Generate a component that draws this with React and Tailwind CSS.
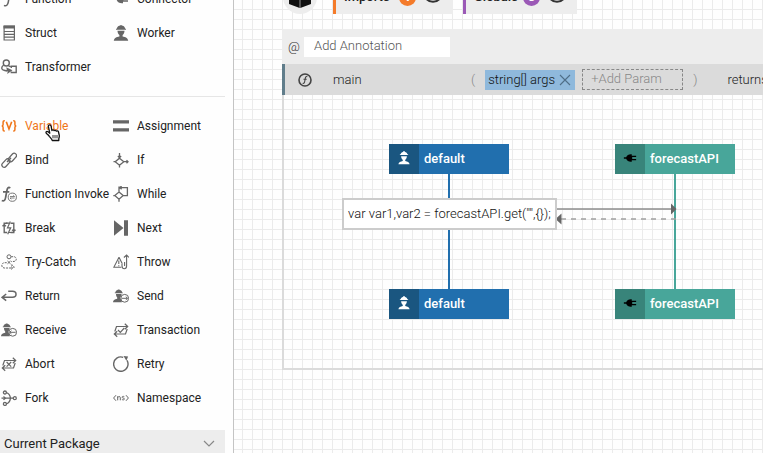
import React from "react";

const S = { fill: "none", stroke: "currentColor", strokeWidth: 1.3 };

function Icon({ children }) {
  return (
    <svg viewBox="0 0 16 16" className="size-4 shrink-0" aria-hidden="true">
      {children}
    </svg>
  );
}

const workerShape = (
  <g fill="currentColor">
    <path d="M3 4.700v-.9h.8C4 2.200 5 1.100 6.600.800L7 .2h2l.4.6c1.600.3 2.600 1.400 2.800 3h.8v.9z" />
    <path d="M4.500 5.800h7c0 1.800-.7 3.300-1.900 4.300v1.500c3 .7 5.200 1.300 5.600 4.200H.8c.4-2.900 2.600-3.500 5.600-4.200v-1.500C5.200 9.100 4.500 7.600 4.500 5.800z" />
  </g>
);

const smallWorker = (
  <g fill="currentColor">
    <path d="M1.800 5.200V4.500h.6C2.600 3.200 3.500 2.200 4.600 2l.3-.6h1.600l.3.600c1.300.2 2.200 1.200 2.400 2.500h.6v.7z" />
    <path d="M3 5.900h5.600c0 1.400-.5 2.700-1.300 3.500v1.300l1.500.6v2.900H0c0-2 1.400-2.700 4.200-3.500V9.400C3.400 8.600 3 7.300 3 5.900z" />
  </g>
);

const loopArrows = (
  <g {...S} strokeWidth="1.200">
    <path d="M1.800 9.500L3.500 4.500h10.800M11.800 1.700l2.900 2.800-2.900 2.800" />
    <path d="M14.200 7l-1.700 5H1.700M4.200 14.800L1.300 12l2.900-2.800" />
  </g>
);

const icons = {
  fn: (
    <path {...S} strokeWidth="1.500" d="M12.500 2.500C10 .8 8.700 3 8.200 6l-.9 5c-.5 3-2 4.600-4.300 3.400M5 6.500h6" />
  ),
  connector: (
    <path
      fill="currentColor"
      d="M1 7.200h2.600C4.500 5 6.300 3.700 9 3.700h1v1.600h5v1.500h-4.500v2.400H15v1.500h-5v1.600H9c-2.700 0-4.500-1.300-5.400-3.500H1z"
    />
  ),
  struct: (
    <g>
      <path {...S} strokeWidth="1.200" d="M3.100 1v14h10.300V1M3 6.500h10.500M3 9.300h10.500M3 12.100h10.500M3 15h10.500" />
      <path fill="currentColor" d="M2.500.3H14v3.200H2.500z" />
    </g>
  ),
  worker: workerShape,
  transformer: (
    <g {...S} strokeWidth="1.400">
      <circle cx="5.300" cy="4" r="3" />
      <path d="M2.700 6C-.2 8 .3 10.800 3 11.300L6 12" />
      <path d="M10.300 9V7.200h4.900v6.300h-4.900v-1M7.500 6.800l2 .8" />
      <path fill="currentColor" stroke="none" d="M5.200 8.300l6.300 3-5.300 3.700.5-2.500-3-1.200 2.200-.6z" />
    </g>
  ),
  variable: (
    <g fill="none" stroke="currentColor" strokeWidth="1.500">
      <path d="M3.800 2.800H3.300c-.9 0-1.200.4-1.200 1.300v2.300c0 1-.4 1.500-1.400 1.500 1 0 1.400.6 1.400 1.500v2.400c0 .9.300 1.300 1.200 1.300h.5" />
      <path d="M12.200 2.800h.5c.9 0 1.200.4 1.200 1.300v2.300c0 1 .4 1.500 1.400 1.500-1 0-1.400.6-1.400 1.500v2.400c0 .9-.3 1.300-1.200 1.300h-.5" />
      <path strokeWidth="1.600" d="M5.300 3.800L8 11l2.700-7.200" />
    </g>
  ),
  assignment: <path fill="currentColor" d="M0 2.300h16v3.200H0zM0 10.300h16v3.200H0z" />,
  bind: (
    <g {...S} strokeWidth="1.300">
      <rect x="6.300" y="3.300" width="9.800" height="4.600" rx="2.300" transform="rotate(-48 11.200 5.300)" />
      <rect x="-.1" y="8.800" width="9.800" height="4.600" rx="2.300" transform="rotate(-48 4.800 10.900)" />
      <path d="M6 10l4-4.300" />
    </g>
  ),
  iff: (
    <path
      {...S}
      d="M6.500 1v4.500M4.900 4l1.600 1.800L8.100 4M6.500 6.200l4.300 3.500-4.300 3.500-4.300-3.500zM.5 9.700h1.800M10.800 9.700H15M13.500 8.200L15 9.700l-1.500 1.500M6.500 13v2.600"
    />
  ),
  invoke: (
    <g>
      <path {...S} strokeWidth="1.700" d="M9.300 2C7.300.6 6.300 2.300 5.800 5l-1.200 6.500C4.200 14.200 2.900 15.600.8 14.500M2 5.900h6.300" />
      <circle cx="11.300" cy="11.200" r="4.100" fill="#fff" stroke="currentColor" strokeWidth=".9" />
      <path {...S} strokeWidth=".8" d="M9 10.500h4.600L12.300 9.300M13.600 12H9l1.300 1.200" />
    </g>
  ),
  while: (
    <path
      {...S}
      d="M6 .5v5M6 6l4.200 3.600L6 13.200 1.800 9.600zM.3 9.600h1.500M6 13.200v2.600M10.200 9.600h4.200V1.600H6.600M8.600 0L6.800 1.600l1.800 1.600"
    />
  ),
  break: (
    <g {...S} strokeWidth="1.400">
      <path d="M6.500 3.200H3.200v9.300h3M9.500 3.200h3.300v9.300H9.500M1.500 6.200l1.700-1.600 1.700 1.600M11.100 9.700l1.700 1.600 1.700-1.600" />
      <path strokeWidth="1.200" d="M9.300 1.500L6.500 7.800h3.200l-3 6.500M5 3.200h3M8 12.500h3" />
    </g>
  ),
  next: <path fill="currentColor" d="M1 .3L10.500 8 1 15.700zM11 .3h4v15.400h-4z" />,
  trycatch: (
    <g {...S} strokeWidth="1">
      <circle cx="8" cy="2.800" r="2" />
      <path strokeDasharray="2 1" d="M10.200 2.700h3c2.800.5 2.700 4.500 0 4.700l-3 .2M5.700 8.700H3.300C0 9.200 0 13.800 3.300 14h7" />
      <path strokeDasharray="2 1" d="M10 11c2 0 3 .8 3 3" />
      <path d="M6.500 7l3 2.800M9.500 7l-3 2.800M10 12.600l1.700 1.400-1.700 1.400" />
    </g>
  ),
  throw: (
    <g {...S} strokeWidth="1.100">
      <path d="M6 3.300L.8 13.300h7.600M6 3.300l3.300 6.500M5.800 6.500V10M5.800 11.200v1" />
      <path d="M9 10v2c.2 3.600 4.500 3.600 4.600 0V1.500M11.600 12V8M10.900 3.500l2.700-2.500 2.300 2.500" />
    </g>
  ),
  return: <path {...S} strokeWidth="1.500" d="M5.200 6L1 9.300l4.200 3.300M1.300 9.300h10.200c4.700 0 4.700-6 0-6H7.200" />,
  send: (
    <g>
      {smallWorker}
      <circle cx="11.700" cy="10.300" r="3.900" fill="#fff" stroke="currentColor" strokeWidth="1" />
      <path {...S} strokeWidth="1" d="M8.500 10.300h6M12.800 8.700l1.700 1.600-1.700 1.600" />
    </g>
  ),
  receive: (
    <g>
      {smallWorker}
      <circle cx="11.700" cy="10.300" r="3.900" fill="#fff" stroke="currentColor" strokeWidth="1" />
      <path {...S} strokeWidth="1" d="M14.700 10.300h-6M10.400 8.700l-1.700 1.600 1.700 1.600" />
    </g>
  ),
  transaction: (
    <g>
      {loopArrows}
      <path {...S} strokeWidth="1.200" d="M5 8l2.300 2.300L11.300 6" />
    </g>
  ),
  abort: (
    <g>
      {loopArrows}
      <path {...S} strokeWidth="1.200" d="M5.600 6l4.600 4.600M10.200 6l-4.600 4.600" />
    </g>
  ),
  retry: (
    <g>
      <path {...S} strokeWidth="1.400" d="M10.200 1.300A7.200 7.200 0 1 0 14 4.400" />
      <path fill="currentColor" d="M10.500 0l4.600.4-1.700 4.300z" />
    </g>
  ),
  fork: (
    <g {...S} strokeWidth="1.300">
      <path d="M.5 8.200H12M9.500 8.200C9 5 7.500 3 5.200 2.600M9.500 8.200C9 11.500 7.500 13.500 5.200 13.900" />
      <circle cx="3.900" cy="2.500" r="1.500" />
      <circle cx="3.900" cy="13.900" r="1.500" />
      <circle cx="13.800" cy="8.200" r="1.500" />
      <path d="M2.500 6.500l1.800 1.700-1.800 1.700" />
    </g>
  ),
  namespace: (
    <g {...S} strokeWidth="1">
      <path d="M3 5.200L.6 8 3 10.800M13 5.200L15.400 8 13 10.800" />
      <path d="M4.700 10.300V6.200M4.700 7.600c.8-1.500 2.600-1.500 2.600.2v2.500M11.300 6.700c-1-.6-2.300-.4-2.200.6.200 1 2.200.5 2.300 1.500.1 1.200-1.500 1.400-2.500.6" />
    </g>
  ),
};

function Tool({ icon, label, active }) {
  return (
    <button
      type="button"
      className={
        "flex h-[34px] items-center gap-2 whitespace-nowrap text-left text-xs " +
        (active ? "text-[#ef7519]" : "text-[#666]")
      }
    >
      <Icon>{icons[icon]}</Icon>
      <span className={active ? "font-normal" : "font-normal text-[#222]"}>{label}</span>
    </button>
  );
}

const definitions = [
  ["fn", "Function"],
  ["connector", "Connector"],
  ["struct", "Struct"],
  ["worker", "Worker"],
  ["transformer", "Transformer"],
];

const statements = [
  ["variable", "Variable"],
  ["assignment", "Assignment"],
  ["bind", "Bind"],
  ["iff", "If"],
  ["invoke", "Function Invoke"],
  ["while", "While"],
  ["break", "Break"],
  ["next", "Next"],
  ["trycatch", "Try-Catch"],
  ["throw", "Throw"],
  ["return", "Return"],
  ["send", "Send"],
  ["receive", "Receive"],
  ["transaction", "Transaction"],
  ["abort", "Abort"],
  ["retry", "Retry"],
  ["fork", "Fork"],
  ["namespace", "Namespace"],
];

function Palette() {
  return (
    <aside className="relative flex w-[234px] shrink-0 flex-col overflow-hidden border-r border-[#c4c4c4] bg-[#fefefe]">
      <div className="-mt-[18px] grid shrink-0 grid-cols-[112px_1fr] pl-px">
        {definitions.map(([icon, label]) => (
          <Tool key={label} icon={icon} label={label} />
        ))}
      </div>
      <hr className="mt-3 mr-2 mb-3 shrink-0 border-[#e6e6e6]" />
      <div className="grid shrink-0 grid-cols-[112px_1fr] pl-px">
        {statements.map(([icon, label]) => (
          <Tool key={label} icon={icon} label={label} active={label === "Variable"} />
        ))}
      </div>
      <button
        type="button"
        className="mt-[15px] mr-2 flex h-7 shrink-0 items-center justify-between bg-[#ededed] pr-2.5 pl-1 font-normal text-[#222]"
      >
        Current Package
        <svg viewBox="0 0 12 8" className="h-2 w-3" aria-hidden="true">
          <path d="M1 1l5 5 5-5" fill="none" stroke="#888" strokeWidth="1.200" />
        </svg>
      </button>
      <svg viewBox="0 0 16 18" className="absolute top-[124px] left-[45px] h-[18px] w-4" aria-hidden="true">
        <path
          d="M3.300 2.200c0-1.800 2.600-1.800 2.800 0l.8 4.300c.5-1 2-.8 2.200.2.600-.8 2-.5 2.200.5.700-.6 2-.3 2.200.8l.8 3.500c.2 1.500-.5 2.500-.5 3.500v1.500H7.300c-.5-1.500-2-2.800-3-4.200C3.500 11 1.500 10 1 8.800c-.3-1.200 1-1.800 2-1l1.800 1.400z"
          fill="#fff"
          stroke="#111"
          strokeWidth="1.300"
          strokeLinejoin="round"
        />
        <path d="M8 11v3.300M10 11v3.300M12 11v3.300" stroke="#111" strokeWidth=".9" />
      </svg>
    </aside>
  );
}

function Eye() {
  return (
    <svg viewBox="0 0 18 12" className="h-3 w-[18px]" aria-hidden="true">
      <path d="M1 5.500C4-.5 14-.5 17 5.500 14 12.500 4 12.500 1 5.500z" fill="none" stroke="#333" strokeWidth="2" />
      <circle cx="9" cy="5.500" r="2.500" fill="#333" />
    </svg>
  );
}

function SummaryTab({ label, tabClass, badgeClass, count }) {
  return (
    <div className={"flex h-[34px] items-center border-l-3 bg-[#ededed] pr-[11px] pl-2 " + tabClass}>
      <span className="flex-1 font-medium text-[#222]">{label}</span>
      <span
        className={"mr-2 flex size-[17px] items-center justify-center rounded-full text-[13px] font-bold text-white " + badgeClass}
      >
        {count}
      </span>
      <button type="button" aria-label={"Show " + label}>
        <Eye />
      </button>
    </div>
  );
}

function LifelineCap({ icon, label, iconClass, barClass }) {
  return (
    <div className={"flex h-[30px] w-full items-center " + barClass}>
      <span className={"flex h-full w-[30px] items-center justify-center pb-0.5 " + iconClass}>
        <svg viewBox="0 0 16 16" className="size-3.5" aria-hidden="true">
          {icon}
        </svg>
      </span>
      <span className="pl-[5px] font-medium text-white">{label}</span>
    </div>
  );
}

function Lifeline({ lineClass, ...cap }) {
  return (
    <div className="flex w-[120px] flex-col items-center">
      <LifelineCap {...cap} />
      <div className={"h-[115px] w-0.5 " + lineClass} />
      <LifelineCap {...cap} />
    </div>
  );
}

const capWorker = (
  <g fill="currentColor">
    <path d="M3.300 4.600v-1h.9C4.500 2 5.500 1.200 6.800 1l.3-.8h1.800l.3.800c1.300.2 2.300 1 2.600 2.600h.9v1z" />
    <path d="M4.700 6h6.600c0 1.800-.8 3.200-1.900 4v1.300c2.400.5 4.800 1.300 5 3.900H1.600c.2-2.600 2.600-3.400 5-3.900V10c-1.100-.8-1.900-2.200-1.900-4z" />
  </g>
);

function Diagram() {
  return (
    <div className="relative flex gap-[106px] border-b-2 border-l-2 border-[#dbdbdb] pt-[49px] pb-[49px] pl-[105px]">
      <Lifeline
        label="default"
        icon={capWorker}
        iconClass="bg-[#1a5680] text-white"
        barClass="bg-[#216fae]"
        lineClass="bg-[#216fae]"
      />
      <Lifeline
        label="forecastAPI"
        icon={icons.connector}
        iconClass="bg-[#38847a] text-black"
        barClass="bg-[#48a69a]"
        lineClass="bg-[#48a69a]"
      />
      <svg viewBox="0 0 122 20" className="absolute top-[104px] left-[271px] h-5 w-[122px]" aria-hidden="true">
        <path d="M0 10h118" stroke="#8c8c8c" strokeWidth="1.500" />
        <path d="M116 4.500l5.500 5.500-5.500 5.500z" fill="#666" />
      </svg>
      <svg viewBox="0 0 122 20" className="absolute top-[114px] left-[271px] h-5 w-[122px]" aria-hidden="true">
        <path d="M6 10h115" stroke="#a0a0a0" strokeWidth="1.500" strokeDasharray="5 5" />
        <path d="M6.500 4.500L.5 10l6 5.500z" fill="#666" />
      </svg>
      <div className="absolute top-[103px] left-[58px] flex h-8 w-[215px] items-center justify-center border-2 border-[#ccc] bg-white whitespace-nowrap text-[#111]">
        {'var var1,var2 = forecastAPI.get("",{});'}
      </div>
    </div>
  );
}

function FunctionHeader() {
  return (
    <div className="flex h-[31px] items-center border-l-3 border-[#607d8b] bg-[#dbdbdb] whitespace-nowrap text-[#222]">
      <svg viewBox="0 0 16 16" className="ml-3 size-4 shrink-0" aria-hidden="true">
        <circle cx="8" cy="8" r="6" fill="none" stroke="#444" strokeWidth="1.600" />
        <path d="M10.300 4.800C8.900 4 8.500 5 8.200 6.800l-.5 2.700c-.3 1.600-.9 2.200-2 1.700M6.500 7.200h3.200" fill="none" stroke="#444" strokeWidth="1.100" />
      </svg>
      <span className="ml-5 w-[138px] shrink-0">main</span>
      <span className="text-[#888]">(</span>
      <span className="ml-2.5 flex h-5 w-[90px] shrink-0 items-center justify-between bg-[#8fb9dc] pr-1 pl-[3px] text-[#111]">
        string[] args
        <button type="button" aria-label="Remove string[] args">
          <svg viewBox="0 0 12 12" className="size-3" aria-hidden="true">
            <path d="M1 1l10 10M11 1L1 11" stroke="#4f6e88" strokeWidth="1.100" />
          </svg>
        </button>
      </span>
      <input
        aria-label="Add Param"
        placeholder="+Add Param"
        className="ml-[7px] h-[21px] w-[101px] shrink-0 border border-dashed border-[#888] bg-transparent px-2 pb-0.5 outline-none placeholder:text-[#888]"
      />
      <span className="ml-2.5 text-[#888]">)</span>
      <span className="ml-[30px]">returns</span>
    </div>
  );
}

export default function App() {
  return (
    <div className="flex h-screen overflow-hidden bg-[#fefefe] font-['Roboto',sans-serif] text-[13px] leading-4 font-light">
      <Palette />
      <main className="min-w-0 flex-1 overflow-hidden bg-[linear-gradient(to_right,#ebebeb_1px,transparent_1px),linear-gradient(to_bottom,#ebebeb_1px,transparent_1px)] bg-size-[10px_10px] bg-position-[8px_9px] pl-12">
        <div className="-mt-5 flex items-center">
          <div className="mr-4 ml-px flex size-[34px] items-center justify-center rounded-full bg-[#ededed]">
            <svg viewBox="0 0 22 22" className="size-[22px]" aria-hidden="true">
              <path d="M0 3.500l10.700 3.700V22L0 18zM22 3.500L11.300 7.200V22L22 18zM11 0l10 3-10 3.500L1 3z" fill="#111" />
            </svg>
          </div>
          <SummaryTab label="Imports" count={1} tabClass="mr-2.5 w-[120px] border-[#f47b2a]" badgeClass="bg-[#f47b2a]" />
          <SummaryTab label="Globals" count={0} tabClass="w-[114px] border-[#9b59b6]" badgeClass="bg-[#9b59b6]" />
        </div>
        <section className="mt-[15px]">
          <div className="flex h-[35px] items-center gap-1 bg-[#ededed] pl-1.5">
            <label htmlFor="annotation" className="w-3 text-[#333]">
              @
            </label>
            <input
              id="annotation"
              placeholder="Add Annotation"
              className="h-5 w-[146px] bg-white px-2.5 pb-0.5 outline-none placeholder:text-[#555]"
            />
          </div>
          <FunctionHeader />
          <Diagram />
        </section>
      </main>
    </div>
  );
}
